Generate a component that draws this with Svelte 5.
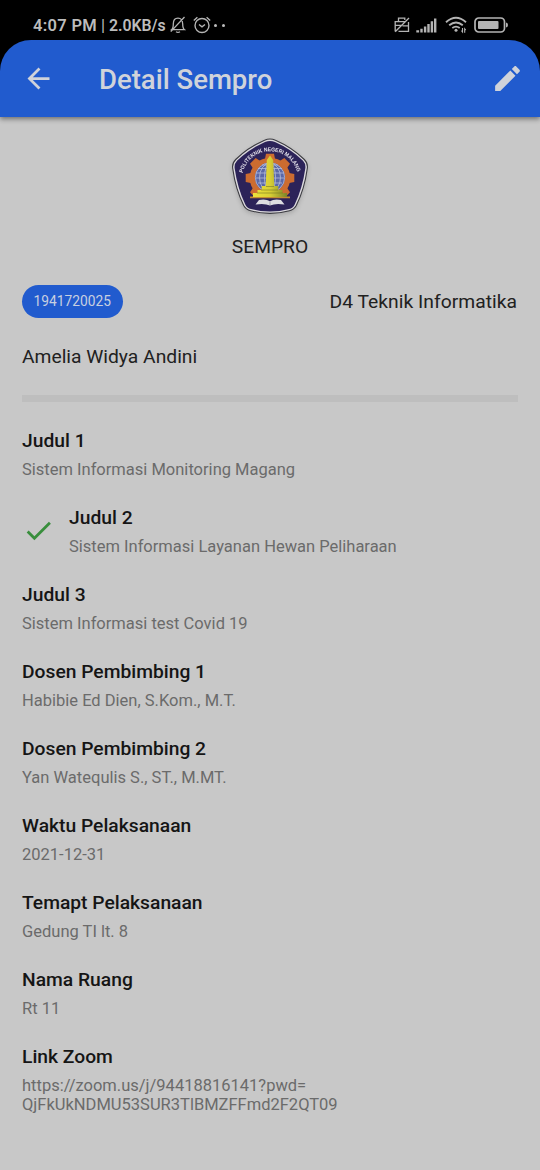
<script>
  const fields = [
    { title: 'Judul 1', lines: ['Sistem Informasi Monitoring Magang'] },
    { title: 'Judul 2', lines: ['Sistem Informasi Layanan Hewan Peliharaan'], checked: true },
    { title: 'Judul 3', lines: ['Sistem Informasi test Covid 19'] },
    { title: 'Dosen Pembimbing 1', lines: ['Habibie Ed Dien, S.Kom., M.T.'] },
    { title: 'Dosen Pembimbing 2', lines: ['Yan Watequlis S., ST., M.MT.'] },
    { title: 'Waktu Pelaksanaan', lines: ['2021-12-31'] },
    { title: 'Temapt Pelaksanaan', lines: ['Gedung TI lt. 8'] },
    { title: 'Nama Ruang', lines: ['Rt 11'] },
    { title: 'Link Zoom', lines: ['https://zoom.us/j/94418816141?pwd=', 'QjFkUkNDMU53SUR3TlBMZFFmd2F2QT09'] }
  ];
  const teeth = [0, 45, 90, 135, 225, 270, 315];
</script>

<div class="screen">
  <div class="status">
    <span class="clock">4:07 PM</span>
    <span class="sep">|</span>
    <span class="speed">2.0KB/s</span>
    <svg class="bell" width="16" height="18" viewBox="0 0 16 18" fill="none" stroke="#b4b4b4" stroke-width="1.3">
      <path d="M1.500 13.700c1.800-1.200 1.800-3 1.800-5.700C3.300 4.300 5.100 2.200 8 2.200s4.700 2.100 4.700 5.800c0 2.700 0 4.500 1.800 5.700zM6 15.700q2 1.300 4 0M.8 15.600 14.500 1" />
    </svg>
    <svg class="alarm" width="18" height="18" viewBox="0 0 18 18" fill="none" stroke="#b4b4b4" stroke-width="1.400">
      <circle cx="9" cy="9.500" r="7" />
      <path d="M.8 4.400 4.400 1.200M17.200 4.400l-3.600-3.200M6 8.500l3 2.300 3-2.300" />
    </svg>
    <span class="dots"><i></i><i></i></span>
    <svg class="sim" width="16" height="16" viewBox="0 0 16 16" fill="none" stroke="#b4b4b4" stroke-width="1.300">
      <path d="M4.500 4.500V1.200h6.300V3M1.200 14.400V4.600h9.300M1.200 8.300h7M4.500 14.400h10V5M8.500 8.800h6M1.200 14.800 15 1" />
    </svg>
    <svg class="signal" width="21" height="15" viewBox="0 0 21 15" fill="#b4b4b4">
      <path d="M.3 12.300h2.800V14.500H.3zM4.300 10.800h2.400v3.700H4.300zM7.900 8.500h2.400v6H7.900zM11.300 6h2.400v8.500h-2.400zM14.700 3.300h2.400v11.200h-2.400zM18 .5h2.400v14H18z" />
    </svg>
    <svg class="wifi" width="22" height="18" viewBox="0 0 22 18" fill="none" stroke="#b4b4b4" stroke-width="1.900">
      <path d="M1 6.200Q11-2.700 21 6.200M4.200 9.200q6.800-5.500 13.600 0M7.300 12q3.700-2.700 7.400 0" />
      <circle cx="11" cy="14.200" r="1.500" fill="#b4b4b4" stroke="none" />
      <path stroke-width="1.100" d="M17.500 12v4l-1-1.300M19.700 16.800v-4l1 1.300" />
    </svg>
    <svg class="battery" width="36" height="16" viewBox="0 0 36 16">
      <rect x="1" y="1" width="29.500" height="14" rx="3.800" fill="none" stroke="#b4b4b4" stroke-width="1.700" />
      <rect x="4" y="4" width="20.500" height="8" rx="1" fill="#b4b4b4" />
      <path d="M32 5.500q2 .2 2 2.500t-2 2.500z" fill="#b4b4b4" />
    </svg>
  </div>

  <header>
    <svg class="back" width="33" height="33" viewBox="0 0 24 24" fill="#d0d3da">
      <path d="M20 11H7.830l5.590-5.590L12 4l-8 8 8 8 1.410-1.410L7.830 13H20v-2z" />
    </svg>
    <h1>Detail Sempro</h1>
    <svg class="edit" width="33" height="33" viewBox="0 0 24 24" fill="#d0d3da">
      <path d="M3 17.250V21h3.750L17.810 9.940l-3.750-3.750L3 17.250zM20.710 7.040c.39-.39.39-1.020 0-1.410l-2.340-2.340c-.39-.39-1.020-.39-1.410 0l-1.830 1.830 3.750 3.750 1.830-1.830z" />
    </svg>
  </header>

  <main>
    <svg class="logo" width="90" height="90" viewBox="0 0 90 90">
      <defs>
        <path id="arc" d="M17.700 43A28 28 0 0 1 72.300 43" />
        <linearGradient id="gold" x2="1"><stop offset="0" stop-color="#eee33c" /><stop offset=".5" stop-color="#d8cf35" /><stop offset="1" stop-color="#7d8428" /></linearGradient>
      </defs>
      <path id="shield" d="M39.500 10.300Q45 7.700 50.500 10.300 67 17.500 79.300 29.500 83.300 33.500 82.200 39 79.500 59 71.300 75.500 69 79.700 64.500 80.700 45 86 25.500 80.700 21 79.700 18.700 75.500 10.500 59 7.800 39 6.700 33.500 10.700 29.500 23 17.500 39.500 10.300z" fill="#dcdade" stroke="#3a3a40" stroke-width="1.100" />
      <path d="M40 12Q45 9.800 50 12 66 19 78 30.800 81 34 80.300 38.600 77.500 58.500 69.700 74.500 68 78.200 64 79 45 84 26 79 22 78.200 20.300 74.500 12.500 58.500 9.700 38.600 9 34 12 30.800 24 19 40 12z" fill="#2c2359" />
      <g fill="#cc6c30" transform="translate(45 48)">
        {#each teeth as angle}
          <path d="M-5.200-18-4-24.300h8L5.200-18z" transform="rotate({angle})" />
        {/each}
        <circle r="20.300" />
      </g>
      <circle cx="45" cy="47.500" r="15" fill="#5a68a8" />
      <g fill="none" stroke="#b5bddb" stroke-width=".8">
        <circle cx="45" cy="47.500" r="14.600" /><ellipse cx="45" cy="47.500" rx="10.500" ry="14.300" /><ellipse cx="45" cy="47.500" rx="5.500" ry="14.300" />
        <path d="M31 43h28M31 48h28M33 38.500h24M37 35h16M33 53h24" />
      </g>
      <path d="M19 66.500h52L66 78H24z" fill="#2c2359" />
      <path d="M25 66.500h40v1.800H25z" fill="#c28c32" />
      <path d="M45 25.500 48.200 30 49.300 56h4v4h4.200v3h4.500v4H28v-4h4.500v-3h4.200v-4h4l1.100-26z" fill="url(#gold)" />
      <path d="M32 63h26M36 60h17M41 56.500h8" stroke="#777923" stroke-width=".6" />
      <path d="M34 70q7-1.300 11 1.300 4-2.600 11-1.300l3.500 4.500q-9-1.500-14.500 1-5.500-2.500-14.500-1z" fill="#dedee2" />
      <path d="M45 71.500v4" stroke="#777487" stroke-width=".6" />
      <text><textPath href="#arc" textLength="74" lengthAdjust="spacingAndGlyphs">POLITEKNIK NEGERI MALANG</textPath></text>
    </svg>
    <div class="kind">SEMPRO</div>
    <div class="identity">
      <span class="chip">1941720025</span>
      <span class="program">D4 Teknik Informatika</span>
    </div>
    <div class="name">Amelia Widya Andini</div>
    <div class="divider"></div>

    <section>
      {#each fields as field}
        <div class="row">
          {#if field.checked}
            <svg class="check" width="33" height="33" viewBox="0 0 24 24" fill="#388e3c">
              <path d="M9 16.170 4.830 12l-1.420 1.410L9 19 21 7l-1.410-1.410z" />
            </svg>
          {/if}
          <div>
            <h2>{field.title}</h2>
            {#each field.lines as line}
              <p>{line}</p>
            {/each}
          </div>
        </div>
      {/each}
    </section>
  </main>
</div>

<style>
  :global(body) { background: #000; }
  .screen {
    width: 540px;
    height: 1170px;
    overflow: hidden;
    background: #000;
    font-family: Roboto, sans-serif;
    white-space: nowrap;
    display: flex;
    flex-direction: column;
  }
  svg { display: block; flex: none; }
  .status {
    height: 40px;
    box-sizing: border-box;
    padding: 10px 33px 0 33px;
    display: flex;
    align-items: center;
    color: #bcbcbc;
    font-size: 16.500px;
    font-weight: 600;
  }
  .clock { width: 68px; letter-spacing: .3px; }
  .sep { width: 8px; font-weight: 400; }
  .speed { width: 60px; font-size: 15.800px; }
  .bell { margin-left: 1px; }
  .alarm { margin-left: 7px; }
  .dots { display: flex; gap: 5px; margin-left: 3px; }
  .dots i { width: 3px; height: 3px; border-radius: 50%; background: #bcbcbc; }
  .sim { margin-left: auto; }
  .signal { margin-left: 6px; }
  .wifi { margin-left: 8px; }
  .battery { margin-left: 7px; margin-right: -3px; }
  header {
    height: 77px;
    flex: none;
    box-sizing: border-box;
    padding: 0 16.500px 0 22px;
    display: flex;
    align-items: center;
    background: #215bce;
    border-radius: 31px 31px 0 0;
    box-shadow: 0 2px 5px rgba(0, 0, 0, .45);
    z-index: 1;
  }
  h1 { margin: 2px 0 0 44px; font-size: 27.500px; line-height: 32px; font-weight: 500; color: #d0d3da; }
  .edit { margin-left: auto; }
  main { flex: 1; background: #c8c8c8; padding: 13px 22px 0; color: #212121; font-size: 19.250px; line-height: 23px; }
  .logo { margin: 0 auto; filter: drop-shadow(0 2px 2px rgba(0, 0, 0, .16)); }
  .logo text { font: 700 5.500px "Liberation Sans", sans-serif; fill: #e8e6ee; }
  .kind { text-align: center; margin-top: 15px; }
  .identity { display: flex; justify-content: space-between; align-items: center; height: 33px; margin-top: 27px; }
  .chip {
    width: 100.500px;
    height: 33px;
    border-radius: 17px;
    background: #215bce;
    color: #c8d0e0;
    font-size: 13.750px;
    line-height: 33px;
    text-align: center;
  }
  .program { margin-right: 1px; letter-spacing: .03px; }
  .name { margin-top: 27px; }
  .divider { height: 7px; background: #bebebe; margin-top: 27px; }
  section { margin-top: 27px; }
  .row { display: flex; align-items: center; min-height: 50px; margin-bottom: 27px; }
  .check { margin-right: 14px; margin-bottom: 1px; }
  h2 { margin: 0 0 8px; font-size: 19.250px; line-height: 23px; font-weight: 500; color: #151515; }
  p { margin: 0; font-size: 16.500px; line-height: 19px; color: #6b6b6b; }
</style>
